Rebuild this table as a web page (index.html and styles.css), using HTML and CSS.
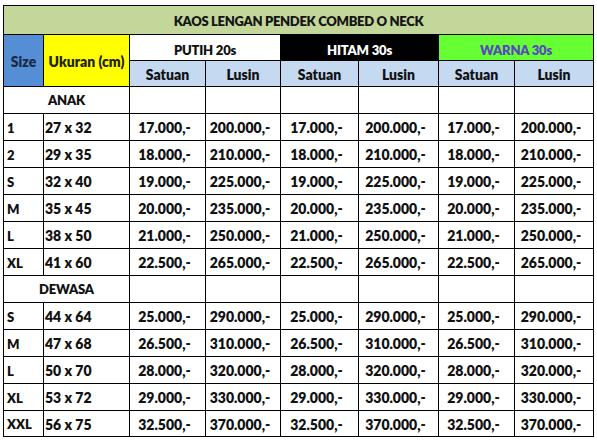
FILE: index.html
```html
<!DOCTYPE html>
<html>
<head>
<meta charset="utf-8">
<link rel="stylesheet" href="styles.css">
</head>
<body>
<div class="page">
  <div class="sheet">
    <div class="c title">KAOS LENGAN PENDEK COMBED O NECK</div>

    <div class="c hsize">Size</div>
    <div class="c hukuran">Ukuran (cm)</div>
    <div class="c hgroup hputih">PUTIH 20s</div>
    <div class="c hgroup hhitam">HITAM 30s</div>
    <div class="c hgroup hwarna">WARNA 30s</div>
    <div class="c hsub">Satuan</div>
    <div class="c hsub">Lusin</div>
    <div class="c hsub">Satuan</div>
    <div class="c hsub">Lusin</div>
    <div class="c hsub">Satuan</div>
    <div class="c hsub">Lusin</div>

    <div class="c group">ANAK</div>
    <div class="c"></div><div class="c"></div><div class="c"></div><div class="c"></div><div class="c"></div><div class="c"></div>

    <div class="c size">1</div><div class="c dim">27 x 32</div>
    <div class="c num">17.000,-</div><div class="c num">200.000,-</div>
    <div class="c num">17.000,-</div><div class="c num">200.000,-</div>
    <div class="c num">17.000,-</div><div class="c num">200.000,-</div>

    <div class="c size">2</div><div class="c dim">29 x 35</div>
    <div class="c num">18.000,-</div><div class="c num">210.000,-</div>
    <div class="c num">18.000,-</div><div class="c num">210.000,-</div>
    <div class="c num">18.000,-</div><div class="c num">210.000,-</div>

    <div class="c size">S</div><div class="c dim">32 x 40</div>
    <div class="c num">19.000,-</div><div class="c num">225.000,-</div>
    <div class="c num">19.000,-</div><div class="c num">225.000,-</div>
    <div class="c num">19.000,-</div><div class="c num">225.000,-</div>

    <div class="c size">M</div><div class="c dim">35 x 45</div>
    <div class="c num">20.000,-</div><div class="c num">235.000,-</div>
    <div class="c num">20.000,-</div><div class="c num">235.000,-</div>
    <div class="c num">20.000,-</div><div class="c num">235.000,-</div>

    <div class="c size">L</div><div class="c dim">38 x 50</div>
    <div class="c num">21.000,-</div><div class="c num">250.000,-</div>
    <div class="c num">21.000,-</div><div class="c num">250.000,-</div>
    <div class="c num">21.000,-</div><div class="c num">250.000,-</div>

    <div class="c size">XL</div><div class="c dim">41 x 60</div>
    <div class="c num">22.500,-</div><div class="c num">265.000,-</div>
    <div class="c num">22.500,-</div><div class="c num">265.000,-</div>
    <div class="c num">22.500,-</div><div class="c num">265.000,-</div>

    <div class="c group">DEWASA</div>
    <div class="c"></div><div class="c"></div><div class="c"></div><div class="c"></div><div class="c"></div><div class="c"></div>

    <div class="c size">S</div><div class="c dim">44 x 64</div>
    <div class="c num">25.000,-</div><div class="c num">290.000,-</div>
    <div class="c num">25.000,-</div><div class="c num">290.000,-</div>
    <div class="c num">25.000,-</div><div class="c num">290.000,-</div>

    <div class="c size">M</div><div class="c dim">47 x 68</div>
    <div class="c num">26.500,-</div><div class="c num">310.000,-</div>
    <div class="c num">26.500,-</div><div class="c num">310.000,-</div>
    <div class="c num">26.500,-</div><div class="c num">310.000,-</div>

    <div class="c size">L</div><div class="c dim">50 x 70</div>
    <div class="c num">28.000,-</div><div class="c num">320.000,-</div>
    <div class="c num">28.000,-</div><div class="c num">320.000,-</div>
    <div class="c num">28.000,-</div><div class="c num">320.000,-</div>

    <div class="c size">XL</div><div class="c dim">53 x 72</div>
    <div class="c num">29.000,-</div><div class="c num">330.000,-</div>
    <div class="c num">29.000,-</div><div class="c num">330.000,-</div>
    <div class="c num">29.000,-</div><div class="c num">330.000,-</div>

    <div class="c size">XXL</div><div class="c dim">56 x 75</div>
    <div class="c num">32.500,-</div><div class="c num">370.000,-</div>
    <div class="c num">32.500,-</div><div class="c num">370.000,-</div>
    <div class="c num">32.500,-</div><div class="c num">370.000,-</div>
  </div>
</div>
</body>
</html>
```

FILE: styles.css
```css
html, body {
  margin: 0;
  padding: 0;
  background: #ffffff;
}

.page {
  padding: 5px 0 0 3px;
}

.sheet {
  display: grid;
  width: 591px;
  grid-template-columns: 39px 85px 75px 74px 77px 79px 75px 78px;
  grid-template-rows: 28px 25px 25px repeat(12, 26px) 25px;
  gap: 1px;
  padding: 1px;
  box-sizing: border-box;
  background: #000000;
  font-family: "Lato", "Liberation Sans", sans-serif;
  font-weight: 800;
  font-size: 14px;
  color: #111111;
}

.c {
  background: #ffffff;
  display: flex;
  align-items: center;
  white-space: nowrap;
  line-height: 1;
  padding-top: 2px;
  box-sizing: border-box;
}

.title {
  grid-column: 1 / -1;
  background: #c4d79b;
  justify-content: center;
  color: #141414;
  font-size: 13px;
  letter-spacing: -0.3px;
}

.hsize {
  grid-row: span 2;
  background: #558ed5;
  justify-content: center;
  color: #1b2a45;
}

.hukuran {
  grid-row: span 2;
  background: #ffff00;
  justify-content: center;
  color: #222200;
}

.hgroup {
  grid-column: span 2;
  justify-content: center;
  font-size: 13px;
  letter-spacing: -0.2px;
  padding-top: 5px;
}

.hhitam {
  background: #000000;
  color: #ffffff;
}

.hwarna {
  background: #66ff33;
  color: #5a46c0;
}

.hsub {
  background: #c5d9f1;
  justify-content: center;
}

.group {
  grid-column: span 2;
  justify-content: center;
  font-size: 13px;
  letter-spacing: -0.2px;
  padding-top: 0;
}

.size {
  padding-left: 3px;
  font-size: 13px;
}

.dim {
  padding-left: 1px;
}

.num {
  justify-content: center;
  padding-right: 6px;
}
```
